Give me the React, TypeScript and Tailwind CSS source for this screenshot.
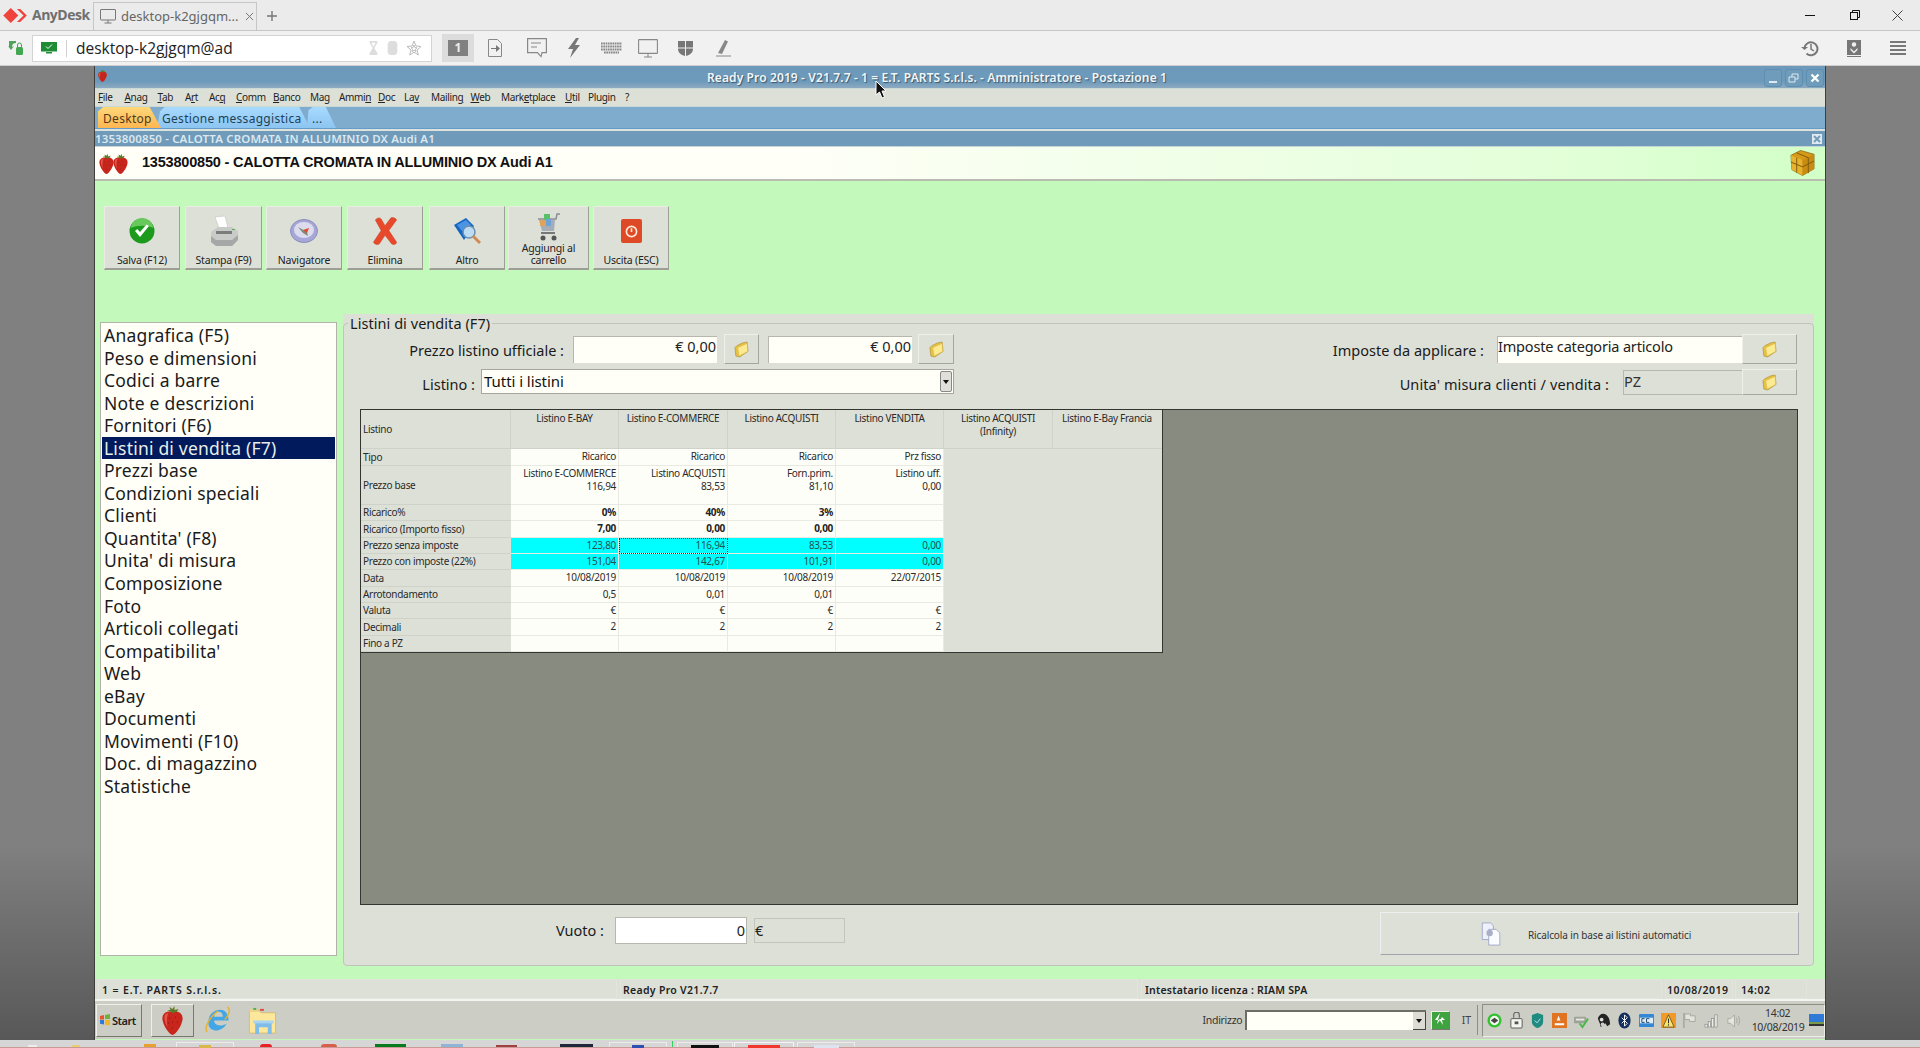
import React from "react";

const Strawberry = ({ className }: { className?: string }) => (
  <svg viewBox="0 0 24 30" className={className}>
    <path d="M12 7C18 5 23 9 22 15C21 21 15 30 12 30C9 30 3 21 2 15C1 9 6 5 12 7Z" fill="#c8261c" />
    <path d="M5 9C3 12 4 17 7 22C6 16 6 12 8 8Z" fill="#e2574a" />
    <path d="M12 8L7 5L10 5L9 2L12 4L14 1L14 5L18 4L16 7Z" fill="#5c7a25" />
    <g fill="#7c1410">
      <circle cx="9" cy="13" r=".6" /><circle cx="15" cy="12" r=".6" /><circle cx="12" cy="17" r=".6" />
      <circle cx="17" cy="17" r=".6" /><circle cx="8" cy="18" r=".6" /><circle cx="12" cy="23" r=".6" />
    </g>
  </svg>
);

const Folder = () => (
  <svg viewBox="0 0 16 18" className="h-[17px] w-[15px]">
    <path d="M1 7L3 5L9 2L14 1L15 11L6 17L2 16Z" fill="#e8c143" stroke="#a88f3a" strokeWidth=".7" />
    <path d="M4 7L14 2.500L14.500 11L5.500 16Z" fill="#fdeb92" stroke="#d9b84a" strokeWidth=".5" />
  </svg>
);

const FolderBtn = ({ w, h, ml }: { w: string; h: string; ml: string }) => (
  <div className={`flex items-center justify-center bg-[#dde0d7] border border-t-[#eff0ea] border-l-[#eff0ea] border-r-[#a5a79f] border-b-[#a5a79f] ${w} ${h} ${ml}`}>
    <Folder />
  </div>
);

const MENU: [string, string, string, string][] = [
  ["", "F", "ile", "w-[26.5px]"],
  ["", "A", "nag", "w-[33px]"],
  ["", "T", "ab", "w-[27.5px]"],
  ["A", "r", "t", "w-[24px]"],
  ["Ac", "q", "", "w-[27px]"],
  ["", "C", "omm", "w-[37px]"],
  ["", "B", "anco", "w-[37px]"],
  ["Ma", "g", "", "w-[29px]"],
  ["Ammi", "n", "", "w-[39px]"],
  ["", "D", "oc", "w-[26px]"],
  ["La", "v", "", "w-[27px]"],
  ["Mailin", "g", "", "w-[39.5px]"],
  ["", "W", "eb", "w-[30.5px]"],
  ["Mark", "e", "tplace", "w-[64px]"],
  ["", "U", "til", "w-[23px]"],
  ["Plugin", "", "", "w-[37px]"],
  ["?", "", "", "w-[10px]"],
];

const LIST = [
  "Anagrafica (F5)", "Peso e dimensioni", "Codici a barre", "Note e descrizioni", "Fornitori (F6)",
  "Listini di vendita (F7)", "Prezzi base", "Condizioni speciali", "Clienti", "Quantita' (F8)",
  "Unita' di misura", "Composizione", "Foto", "Articoli collegati", "Compatibilita'", "Web", "eBay",
  "Documenti", "Movimenti (F10)", "Doc. di magazzino", "Statistiche",
];

type Row = { label: string; h: string; vals: string[][]; bold?: boolean; cyan?: boolean };
const ROWS: Row[] = [
  { label: "Tipo", h: "h-[17px]", vals: [["Ricarico"], ["Ricarico"], ["Ricarico"], ["Prz fisso"]] },
  { label: "Prezzo base", h: "h-[39px]", vals: [["Listino E-COMMERCE", "116,94"], ["Listino ACQUISTI", "83,53"], ["Forn.prim.", "81,10"], ["Listino uff.", "0,00"]] },
  { label: "Ricarico%", h: "h-[16px]", bold: true, vals: [["0%"], ["40%"], ["3%"], [""]] },
  { label: "Ricarico (Importo fisso)", h: "h-[17px]", bold: true, vals: [["7,00"], ["0,00"], ["0,00"], [""]] },
  { label: "Prezzo senza imposte", h: "h-[16px]", cyan: true, vals: [["123,80"], ["116,94"], ["83,53"], ["0,00"]] },
  { label: "Prezzo con imposte (22%)", h: "h-[16px]", cyan: true, vals: [["151,04"], ["142,67"], ["101,91"], ["0,00"]] },
  { label: "Data", h: "h-[17px]", vals: [["10/08/2019"], ["10/08/2019"], ["10/08/2019"], ["22/07/2015"]] },
  { label: "Arrotondamento", h: "h-[16px]", vals: [["0,5"], ["0,01"], ["0,01"], [""]] },
  { label: "Valuta", h: "h-[16px]", vals: [["€"], ["€"], ["€"], ["€"]] },
  { label: "Decimali", h: "h-[17px]", vals: [["2"], ["2"], ["2"], ["2"]] },
  { label: "Fino a PZ", h: "h-[16px]", vals: [[""], [""], [""], [""]] },
];
const COLW = ["w-[108px]", "w-[109px]", "w-[108px]", "w-[108px]"];

const ToolBtn = ({ w, ml, label, icon }: { w: string; ml: string; label: React.ReactNode; icon: React.ReactNode }) => (
  <div className={`relative flex h-[64px] flex-col items-center bg-[#dde0d7] border border-t-[#e9ebe4] border-l-[#e9ebe4] border-r-[#9d9f97] border-b-[#9d9f97] border-b-2 ${w} ${ml}`}>
    <div className="flex h-[44px] w-full items-center justify-center">{icon}</div>
    <div className="absolute inset-x-0 bottom-[2px] text-center text-[10.5px] leading-[12px] text-[#222] tracking-[-0.2px]">{label}</div>
  </div>
);

const TrayIcon = ({ children }: { children: React.ReactNode }) => (
  <svg viewBox="0 0 16 18" className="h-[17px] w-[15px] shrink-0">{children}</svg>
);

export default function App() {
  return (
    <div className="flex h-[1048px] w-[1920px] flex-col overflow-hidden bg-[#808080] font-['Noto_Sans',sans-serif] text-black">
      {/* AnyDesk tab bar */}
      <div className="flex h-[31px] shrink-0 items-end border-b border-[#c6c6c6] bg-[#ebebeb]">
        <div className="flex h-[30px] w-[93px] items-center pl-[3px]">
          <svg viewBox="0 0 26 18" className="h-[17px] w-[25px]">
            <path d="M8 1L16 9L8 17L0 9Z" fill="#ef443b" />
            <path d="M18 2L25 9L18 16L14.5 16L21.5 9L14.5 2Z" fill="#ef443b" />
          </svg>
          <span className="ml-[4px] font-['Open_Sans',sans-serif] text-[14px] font-bold leading-none tracking-[-0.5px] text-[#6f6f6f]">AnyDesk</span>
        </div>
        <div className="flex h-[28px] w-[164px] items-center border border-b-0 border-[#c6c6c6] pl-[6px]">
          <svg viewBox="0 0 16 15" className="h-[15px] w-[16px]" fill="none" stroke="#777" strokeWidth="1">
            <rect x=".5" y=".5" width="15" height="10.5" rx=".5" /><path d="M8 11v3M4.5 14h7" />
          </svg>
          <span className="ml-[5px] text-[13px] leading-none text-[#666]">desktop-k2gjgqm...</span>
          <svg viewBox="0 0 10 10" className="ml-[6px] h-[9px] w-[9px]" stroke="#777" strokeWidth="1.1"><path d="M1 1l8 8M9 1l-8 8" /></svg>
        </div>
        <svg viewBox="0 0 10 10" className="mb-[9px] ml-[10px] h-[10px] w-[10px]" stroke="#777" strokeWidth="1.4"><path d="M5 0v10M0 5h10" /></svg>
        <div className="ml-auto flex h-[30px] items-center">
          <svg viewBox="0 0 10 10" className="h-[10px] w-[10px]" stroke="#111" strokeWidth="1"><path d="M0 5.5h10" /></svg>
          <svg viewBox="0 0 10 10" className="ml-[35px] h-[10px] w-[10px]" fill="none" stroke="#111" strokeWidth="1"><rect x=".5" y="2.5" width="7" height="7" /><path d="M2.5 2.5v-2h7v7h-2" /></svg>
          <svg viewBox="0 0 11 11" className="ml-[32px] mr-[17px] h-[11px] w-[11px]" stroke="#444" strokeWidth="1"><path d="M.5.5l10 10M10.5.5l-10 10" /></svg>
        </div>
      </div>

      {/* AnyDesk toolbar */}
      <div className="flex h-[35px] shrink-0 items-center border-b border-[#cdcdcd] bg-[#f1f1f1]">
        <svg viewBox="0 0 16 16" className="ml-[8px] h-[16px] w-[16px]">
          <path d="M1 1h7v2a4 4 0 0 0-4 4l2-1-3 4-3-4 1 .5z" fill="#3d9b4a" opacity=".9" />
          <rect x="8" y="7" width="7" height="8" rx="1.5" fill="#43a650" />
          <path d="M9.5 7V5a2 2 0 0 1 4 0v2" fill="none" stroke="#43a650" />
        </svg>
        <div className="ml-[8px] flex h-[27px] w-[400px] items-center border border-[#d3d3d3] bg-white">
          <svg viewBox="0 0 16 12" className="ml-[8px] h-[12px] w-[16px]">
            <rect width="16" height="9.5" fill="#1e8c34" /><path d="M5 4.5l2 2 4-4" fill="none" stroke="#fff" /><rect x="5" y="10" width="6" height="1.5" fill="#1e8c34" />
          </svg>
          <div className="ml-[9px] h-[17px] w-px bg-[#d0d0d0]" />
          <span className="ml-[9px] mt-[1px] font-['Open_Sans',sans-serif] text-[15.5px] leading-none text-[#222]">desktop-k2gjgqm@ad</span>
          <svg viewBox="0 0 9 16" className="ml-[136px] h-[14px] w-[9px]" fill="#ddd"><path d="M0 0h9v2L5.5 8 9 14v2H0v-2l3.5-6L0 2zM2 2l2.5 4.5L7 2z" /></svg>
          <svg viewBox="0 0 11 16" className="ml-[9px] h-[14px] w-[11px]" fill="#ddd"><rect width="11" height="16" rx="4" /></svg>
          <svg viewBox="0 0 16 16" className="ml-[8px] h-[16px] w-[16px]" fill="none" stroke="#bbb"><path d="M8 1l2 5 5 .5-4 3.5 1.3 5L8 12.2 3.700 15 5 10 1 6.500 6 6z" /><path d="M8 5l1 2.500 2 .3-1.600 1.500.5 2.200L8 10.300l-1.900 1.200.5-2.200L5 7.800l2-.3z" /></svg>
        </div>
        <div className="ml-[10px] flex h-[28px] w-[32px] items-center justify-center bg-[#dcdcdc]">
          <div className="flex h-[16px] w-[20px] items-center justify-center bg-[#808080] text-[12px] font-bold leading-none text-[#eee]">1</div>
        </div>
        <svg viewBox="0 0 14 18" className="ml-[14px] h-[18px] w-[14px]" fill="none" stroke="#888"><path d="M.5.5h9l4 4v13H.5z" /><path d="M3 9h5V6l4 3.500-4 3.500v-3H3z" fill="#777" stroke="none" /></svg>
        <svg viewBox="0 0 20 20" className="ml-[25px] h-[20px] w-[20px]" fill="none" stroke="#888" strokeWidth="1.200"><path d="M.6.6h18.800v14H15l-1 4-3.500-4H.6z" /><path d="M4 5h10M4 9h6" /></svg>
        <svg viewBox="0 0 12 20" className="ml-[21px] h-[20px] w-[12px]" fill="#777"><path d="M8 0L0 11h5L2 20l10-13H7l4-7z" /></svg>
        <svg viewBox="0 0 21 12" className="ml-[21px] h-[12px] w-[21px]"><g stroke="#888" strokeWidth="1.800" strokeDasharray="1.700 .6"><path d="M0 1.500h21M0 4.500h21M0 7.500h21M3 10.500h15" /></g></svg>
        <svg viewBox="0 0 20 19" className="ml-[16px] h-[19px] w-[20px]" fill="none" stroke="#888" strokeWidth="1.100"><rect x=".6" y=".6" width="18.800" height="13.800" rx=".5" /><path d="M10 14.500V18M6 18h8" /></svg>
        <svg viewBox="0 0 15 15" className="ml-[20px] h-[15px] w-[15px]" fill="#777"><path d="M0 0h7v6.500H0zM8 0h7v6.500H8zM0 7.500h7V15C3 14 0 12 0 7.500zM8 7.500h7C15 12 12 14 8 15z" /></svg>
        <svg viewBox="0 0 15 18" className="ml-[23px] h-[18px] w-[15px]" fill="none"><path d="M2 14L9 1l3 1.500L6 15z" fill="#888" /><path d="M0 17h15" stroke="#888" /></svg>
        <div className="ml-auto flex items-center">
          <svg viewBox="0 0 18 17" className="h-[17px] w-[18px]" fill="none" stroke="#777" strokeWidth="2"><path d="M3.500 8a6.500 6.500 0 1 1 2 5.500" /><path d="M10 4v5l3 2" strokeWidth="1.500" /><path d="M0 7l3.500 3L7 7z" fill="#777" stroke="none" /></svg>
          <svg viewBox="0 0 14 17" className="ml-[28px] h-[17px] w-[14px]" fill="#777"><rect width="14" height="15" /><circle cx="7" cy="4.500" r="2.200" fill="#f1f1f1" /><path d="M3.500 8L7 11.500 10.500 8v2L7 13.500 3.500 10z" fill="#f1f1f1" /><rect y="16" width="14" height="1" /></svg>
          <svg viewBox="0 0 16 14" className="ml-[29px] mr-[14px] h-[14px] w-[16px]" fill="#777"><rect width="16" height="2" /><rect y="4" width="16" height="2" /><rect y="8" width="16" height="2" /><rect y="12" width="16" height="2" /></svg>
        </div>
      </div>

      {/* Remote desktop */}
      <div className="flex h-[974px] shrink-0">
        <div className="w-[94px] shrink-0 bg-gradient-to-b from-[#808080] from-80% to-[#585858]" />
        <div className="relative flex w-[1732px] shrink-0 flex-col border-x border-[#3c3f3a] bg-[#c3f9bb]">
          {/* Title bar */}
          <div className="relative flex h-[22px] shrink-0 items-start bg-gradient-to-b from-[#6d9aba] from-70% to-[#8caac0] pl-[2px]">
            <Strawberry className="mt-[3px] h-[13px] w-[11px]" />
            <div className="ml-[599px] mt-[4px] whitespace-nowrap text-[12px] font-semibold leading-[15px] tracking-[0.11px] text-[#f2f6f8] [text-shadow:1px_1px_1px_#39566c]">
              Ready Pro 2019 - V21.7.7 - 1 = E.T. PARTS S.r.l.s. - Amministratore - Postazione 1
            </div>
            <div className="ml-auto mr-[1px] mt-[3px] flex gap-[3px]">
              {[
                <path key="a" d="M3 11h8" stroke="#dfe8ee" strokeWidth="2" />,
                <path key="b" d="M2 6h6v5H2zM5 6V3h6v5H8" fill="none" stroke="#dfe8ee" strokeWidth="1" />,
                <path key="c" d="M3.500 3.500l7 7M10.500 3.500l-7 7" stroke="#fff" strokeWidth="2.200" />,
              ].map((p, i) => (
                <div key={i} className="flex h-[18px] w-[18px] items-center justify-center rounded-[3px] border border-[#5f8fb0] bg-[#6f9cbb]">
                  <svg viewBox="0 0 14 14" className="h-[14px] w-[14px]">{p}</svg>
                </div>
              ))}
            </div>
          </div>

          {/* Menu */}
          <div className="flex h-[19px] shrink-0 items-center border-y border-[#c9d9d5] bg-[#dde0d7] pb-[1px] pl-[3px] text-[10px] tracking-[-0.35px] text-[#222]">
            {MENU.map(([a, u, b, w], i) => (
              <span key={i} className={`${w} shrink-0 whitespace-nowrap leading-none`}>
                {a}<span className="underline">{u}</span>{b}
              </span>
            ))}
          </div>

          {/* Tabs */}
          <div className="flex h-[22px] shrink-0 items-end border-b border-[#649ccb] bg-[#7fabcc] pl-[3px] text-[12px] leading-none tracking-[0.3px]">
            <div className="z-10 flex h-[21px] w-[63px] items-center bg-gradient-to-b from-[#ffd778] to-[#ffb650] pl-[5px] pt-[2px] text-[#4d3a1a] [clip-path:polygon(0_100%,0_20%,8%_0,82%_0,100%_100%)]">Desktop</div>
            <div className="-ml-[4px] flex h-[21px] w-[153px] items-center bg-gradient-to-b from-[#a8daff] to-[#8cc5f1] pl-[5px] pt-[2px] text-[#1d4258] [clip-path:polygon(0_100%,2%_20%,5%_0,93%_0,100%_100%)]">Gestione messaggistica</div>
            <div className="-ml-[3px] flex h-[21px] w-[29px] items-center bg-gradient-to-b from-[#a8daff] to-[#8cc5f1] pl-[5px] pt-[2px] text-[#1d4258] [clip-path:polygon(0_100%,5%_15%,20%_0,65%_0,100%_100%)]">...</div>
          </div>

          <div className="h-[2px] shrink-0 bg-[#dde3dc]" />

          {/* Child title */}
          <div className="flex h-[16px] shrink-0 items-center border-b border-[#c4d5d6] bg-[#6f9ab9] text-[11.5px] font-semibold leading-none text-[#dbe8f0]">
            <span className="tracking-[0.13px]">1353800850 - CALOTTA CROMATA IN ALLUMINIO DX Audi A1</span>
            <div className="ml-auto mr-[3px] flex h-[10px] w-[10px] items-center justify-center bg-[#dfe9ef]">
              <svg viewBox="0 0 8 8" className="h-[8px] w-[8px]" stroke="#6f9ab9" strokeWidth="1.800"><path d="M1 1l6 6M7 1L1 7" /></svg>
            </div>
          </div>

          {/* Header */}
          <div className="flex h-[34px] shrink-0 items-center border-b-2 border-[#b9bdb0] bg-gradient-to-r from-[#fffff8] from-40% via-[#e2ffd8] via-85% to-[#d2ffc7] pl-[3px]">
            <div className="flex w-[33px]">
              <Strawberry className="h-[21px] w-[17px]" />
              <Strawberry className="-ml-[3px] h-[21px] w-[17px]" />
            </div>
            <span className="mb-[1px] ml-[11px] font-['Liberation_Sans',sans-serif] text-[14.5px] font-bold leading-none tracking-[-0.2px] text-[#111]">1353800850 - CALOTTA CROMATA IN ALLUMINIO DX Audi A1</span>
            <svg viewBox="0 0 28 28" className="ml-auto mr-[9px] h-[28px] w-[27px]">
              <path d="M2 6L12 1l14 4v15l-12 7-11-6z" fill="#d49a18" stroke="#7d5a10" strokeWidth=".7" />
              <path d="M2 6l12 5v16l-11-6z" fill="#e8b32c" />
              <path d="M14 11l12-6v15l-12 7z" fill="#c98c12" />
              <path d="M2 13l12 5 12-6M8 3.500l12 5v16M8 8.500V24" fill="none" stroke="#7d5a10" strokeWidth="1" />
            </svg>
          </div>

          {/* Body */}
          <div className="flex h-[798px] shrink-0 flex-col">
            <div className="ml-[9px] mt-[25px] flex h-[64px] shrink-0">
              <ToolBtn w="w-[76px]" ml="" label="Salva (F12)" icon={
                <svg viewBox="0 0 26 26" className="mt-[4px] h-[26px] w-[26px]"><circle cx="13" cy="13" r="12.500" fill="#1b9a1b" /><path d="M2 10a11 10 0 0 1 22 0c-5-3-16-3-22 0z" fill="#67c95b" /><path d="M6 13l5 6 9-11-2.500-1.500L11 14l-2.800-3z" fill="#fff" /></svg>} />
              <ToolBtn w="w-[77px]" ml="ml-[5px]" label="Stampa (F9)" icon={
                <svg viewBox="0 0 28 32" className="mt-[4px] h-[32px] w-[28px]"><path d="M5 2l10-1 3 12H9z" fill="#fff" stroke="#bbb" strokeWidth=".5" /><path d="M1 17l7-5h14l6 4v8l-6 7H6l-5-4z" fill="#c8cbc8" /><path d="M1 21l5 4h16l6-5v5l-6 6H6l-5-4z" fill="#a5a8a6" /><path d="M6 16h16v3H6z" fill="#7a7d7b" /><path d="M22 14h3v1h-3z" fill="#5ab04a" /></svg>} />
              <ToolBtn w="w-[76px]" ml="ml-[4px]" label="Navigatore" icon={
                <svg viewBox="0 0 28 24" className="mt-[3px] h-[24px] w-[28px]"><ellipse cx="14" cy="12" rx="13.500" ry="11.500" fill="#a6a7d8" stroke="#8d8eb8" /><ellipse cx="14" cy="11" rx="10" ry="8" fill="#dcdcee" /><path d="M8 8l9 5 1 4-5-3z" fill="#7a8c7a" /><path d="M13 11l6-2-2 5z" fill="#e04a2a" /></svg>} />
              <ToolBtn w="w-[76px]" ml="ml-[5px]" label="Elimina" icon={
                <svg viewBox="0 0 26 30" className="mt-[4px] h-[29px] w-[26px]"><path d="M3 3c2-2 4-3 6-1l4 7 6-8c2-1 5 0 6 2l-8 11 8 12c0 2-3 3-5 2l-7-9-6 9c-2 1-5 0-6-2l8-12z" fill="#e8492b" stroke="#c53a20" strokeWidth=".5" /></svg>} />
              <ToolBtn w="w-[76px]" ml="ml-[6px]" label="Altro" icon={
                <svg viewBox="0 0 28 30" className="mt-[5px] h-[30px] w-[28px]"><path d="M1 8L13 1l8 8-10 14z" fill="#1366c4" /><path d="M4 8l9-5 5 5-9 6z" fill="#4c94e2" /><circle cx="16" cy="15" r="6" fill="#bcdcf4" stroke="#6d8fae" strokeWidth="1.500" /><path d="M20 19l7 7" stroke="#d08a55" strokeWidth="3" /></svg>} />
              <ToolBtn w="w-[81px]" ml="ml-[3px]" label={<>Aggiungi al<br />carrello</>} icon={
                <svg viewBox="0 0 24 32" className="-mt-[5px] h-[32px] w-[24px]"><path d="M1 8h18l1-5h3" fill="none" stroke="#8a8f95" strokeWidth="1.500" /><path d="M2 9h16l-1 11H5z" fill="#a5adb8" /><rect x="7" y="3" width="6" height="6" fill="#58c168" /><rect x="3" y="9" width="5" height="6" fill="#e0a35a" /><rect x="9" y="8" width="5" height="7" fill="#6fa3d8" /><path d="M4 22h14" stroke="#777" strokeWidth="2" /><circle cx="6" cy="27" r="2.500" fill="#555" /><circle cx="17" cy="27" r="2.500" fill="#555" /></svg>} />
              <ToolBtn w="w-[76px]" ml="ml-[4px]" label="Uscita (ESC)" icon={
                <div className="mt-[4px] flex h-[24px] w-[21px] items-center justify-center rounded-[2px] bg-[#df4a26]">
                  <svg viewBox="0 0 14 14" className="h-[13px] w-[13px]" fill="none" stroke="#ffe9d8" strokeWidth="1.800"><circle cx="7" cy="7" r="5.500" /><path d="M7 3.500v4" /></svg>
                </div>} />
            </div>

            <div className="ml-[5px] mt-[44px] flex shrink-0">
              {/* Left list */}
              <div className="mt-[8px] h-[634px] w-[237px] shrink-0 border border-[#b0b3a8] bg-[#fffff8] px-px pt-[1px]">
                {LIST.map((t, i) => (
                  <div key={t} className={i === 5
                    ? "h-[22.55px] bg-[#001a5c] pl-[2px] text-[17.500px] leading-[22.55px] tracking-[0.2px] text-[#e8eee8] whitespace-nowrap"
                    : "h-[22.55px] pl-[2px] text-[17.500px] leading-[22.55px] tracking-[0.2px] text-[#1a1a1a] whitespace-nowrap"}>{t}</div>
                ))}
              </div>

              {/* Right panel */}
              <div className="ml-[6px] h-[652px] w-[1471px] shrink-0 rounded-b-[4px] bg-[#dde0d7]">
                <fieldset className="h-full rounded-[4px] border border-[#c2c4ba]">
                  <legend className="ml-[4px] px-[2px] text-[14.500px] leading-[18px] tracking-[0.05px] text-[#1a1a1a]">Listini di vendita (F7)</legend>

                  {/* Row 1 */}
                  <div className="mt-[2px] flex h-[30px] items-center">
                    <div className="mt-[3px] w-[220px] text-right text-[14.500px] leading-none text-[#1a1a1a]">Prezzo listino ufficiale :</div>
                    <div className="ml-[9px] flex h-[27px] w-[144px] justify-end border border-[#b6b8ae] border-r-0 border-b-0 bg-[#fffff8] pr-[1px] text-[14.500px] leading-[19px] text-[#222]">€ 0,00</div>
                    <FolderBtn w="w-[35px]" h="h-[30px]" ml="ml-[7px]" />
                    <div className="ml-[9px] flex h-[27px] w-[144px] justify-end border border-[#b6b8ae] border-r-0 border-b-0 bg-[#fffff8] pr-[1px] text-[14.500px] leading-[19px] text-[#222]">€ 0,00</div>
                    <FolderBtn w="w-[36px]" h="h-[30px]" ml="ml-[6px]" />
                    <div className="ml-auto mt-[3px] text-[14.500px] leading-none text-[#1a1a1a]">Imposte da applicare :</div>
                    <div className="ml-[13px] h-[27px] w-[245px] border border-[#b6b8ae] border-r-0 border-b-0 bg-[#fffff8] text-[14.500px] leading-[19px] tracking-[-0.18px] text-[#222]">Imposte categoria articolo</div>
                    <FolderBtn w="w-[55px]" h="h-[30px]" ml="mr-[16px]" />
                  </div>

                  {/* Row 2 */}
                  <div className="mt-[5px] flex h-[28px] items-start">
                    <div className="mt-[8px] w-[131px] text-right text-[14.500px] leading-none text-[#1a1a1a]">Listino :</div>
                    <div className="ml-[6px] flex h-[25px] w-[473px] items-center justify-between border border-[#a5a79f] bg-[#fffff8] pl-[2px] pr-[1px] text-[15px] leading-none tracking-[-0.05px] text-[#111]">
                      <span>Tutti i listini</span>
                      <div className="flex h-[21px] w-[12px] items-center justify-center rounded-[2px] border border-[#888] bg-[#dfe0da]">
                        <svg viewBox="0 0 6 4" className="h-[4px] w-[6px]"><path d="M0 0h6L3 4z" fill="#111" /></svg>
                      </div>
                    </div>
                    <div className="ml-auto mt-[8px] text-[14.500px] leading-none tracking-[0.1px] text-[#1a1a1a]">Unita' misura clienti / vendita :</div>
                    <div className="ml-[14px] mt-[1px] h-[25px] w-[119px] border border-[#b6b8ae] border-r-0 bg-[#dde0d7] text-[14.500px] leading-[20px] text-[#333]">PZ</div>
                    <FolderBtn w="w-[55px]" h="h-[26px]" ml="mr-[16px]" />
                  </div>

                  {/* Grid */}
                  <div className="ml-[16px] mt-[12px] h-[496px] w-[1438px] border border-[#333630] bg-[#888b80]">
                    <div className="w-[802px] border-b border-r border-[#333630] text-[10px] leading-[13px] tracking-[-0.3px] text-[#2a2a2a]">
                      {/* Header */}
                      <div className="flex h-[39px] border-b border-[#cfd2c8] bg-[#dde0d7]">
                        <div className="flex w-[150px] items-center border-r border-[#cfd2c8] pl-[2px]">Listino</div>
                        {[
                          [["Listino E-BAY"], "w-[108px]"], [["Listino E-COMMERCE"], "w-[109px]"], [["Listino ACQUISTI"], "w-[108px]"], [["Listino VENDITA"], "w-[108px]"],
                          [["Listino ACQUISTI", "(Infinity)"], "w-[109px]"], [["Listino E-Bay Francia"], "w-[108px]"],
                        ].map(([t, w], i) => (
                          <div key={i} className={`${w as string} border-r border-[#cfd2c8] pt-[2px] text-center whitespace-nowrap last:border-r-0`}>
                            {(t as string[]).map((l) => <div key={l}>{l}</div>)}
                          </div>
                        ))}
                      </div>
                      {/* Rows */}
                      {ROWS.map((r) => (
                        <div key={r.label} className={`flex ${r.h}`}>
                          <div className="flex w-[150px] shrink-0 items-center bg-[#dde0d7] pl-[2px] whitespace-nowrap border-b border-[#cfd2c8]">{r.label}</div>
                          {r.vals.map((v, i) => {
                            const focus = r.label === "Prezzo senza imposte" && i === 1;
                            return (
                              <div key={i} className={`${COLW[i]} shrink-0 px-[2px] pt-[1px] text-right whitespace-nowrap border-r border-b border-[#e9ebe3] ${r.cyan ? "bg-[#00ffff] text-[#26504f]" : "bg-[#fefef8]"} ${r.bold ? "font-bold text-[#222]" : ""} ${focus ? "outline-1 -outline-offset-1 outline-dotted outline-[#333]" : ""}`}>
                                {v.map((l, k) => <div key={k}>{l}</div>)}
                              </div>
                            );
                          })}
                          <div className="flex-1 bg-[#dde0d7]" />
                        </div>
                      ))}
                    </div>
                  </div>

                  {/* Bottom */}
                  <div className="mt-[7px] flex h-[43px] items-center">
                    <div className="mb-[6px] w-[260px] text-right text-[14.500px] leading-none text-[#1a1a1a]">Vuoto :</div>
                    <div className="mb-[6px] ml-[11px] h-[27px] w-[132px] border border-[#b6b8ae] bg-white pr-[1px] text-right text-[14.500px] leading-[24px] text-[#222]">0</div>
                    <div className="mb-[6px] ml-[7px] h-[25px] w-[91px] border border-[#c4c6bc] bg-[#dde0d7] text-[14.500px] leading-[22px] text-[#222]">€</div>
                    <div className="ml-auto mr-[14px] flex h-[43px] w-[419px] items-center border border-[#eceef0] border-r-[#a9abb5] border-b-[#a0a2ae] bg-[#dde0d7]">
                      <svg viewBox="0 0 22 26" className="ml-[100px] h-[24px] w-[21px]">
                        <path d="M1 1h9l3 3v15H1z" fill="#eef1fa" stroke="#8d97c0" strokeWidth=".8" />
                        <path d="M8 8h8l4 4v13H8z" fill="#fbfcff" stroke="#8d97c0" strokeWidth=".8" />
                        <circle cx="9" cy="12" r="3.500" fill="#aab0c8" />
                      </svg>
                      <span className="ml-[26px] mt-[2px] text-[10px] leading-none tracking-[-0.12px] text-[#333]">Ricalcola in base ai listini automatici</span>
                    </div>
                  </div>
                </fieldset>
              </div>
            </div>
          </div>

          {/* Status bar */}
          <div className="flex h-[22px] shrink-0 border-b-2 border-[#f3f5f0] bg-[#dde0d7] pl-[3px] text-[10.500px] font-semibold leading-[20px] text-[#222]">
            <div className="w-[519px] border border-[#e3e5dd] pl-[3px] tracking-[0.9px]">1 = E.T. PARTS S.r.l.s.</div>
            <div className="ml-[3px] w-[518px] border border-[#e3e5dd] pl-[2px] tracking-[0.3px]">Ready Pro V21.7.7</div>
            <div className="ml-[3px] w-[521px] border border-[#e3e5dd] pl-[3px] tracking-[0.2px]">Intestatario licenza : RIAM SPA</div>
            <div className="ml-[3px] w-[68px] border border-[#e3e5dd] pl-[1px] tracking-[0.5px]">10/08/2019</div>
            <div className="ml-[2px] w-[72px] border border-[#e3e5dd] pl-[5px] tracking-[0.5px]">14:02</div>
          </div>

          {/* Inner taskbar */}
          <div className="flex h-[38px] shrink-0 items-center bg-[#cccdc4]">
            <div className="ml-[1px] flex h-[33px] w-[46px] items-center border border-[#f0f0ea] border-r-[#77796f] border-b-[#77796f] pl-[2px] text-[11px] font-semibold leading-none tracking-[-0.5px] text-[#222]">
              <svg viewBox="0 0 12 12" className="h-[12px] w-[12px] shrink-0"><path d="M1 2l4-1v4.500H1z" fill="#e5572b" /><path d="M6 1l5-1v5H6z" fill="#6eb23e" /><path d="M1 6h4v4.500l-4-.7z" fill="#2f7ad6" /><path d="M6 6h5v5.500l-5-.7z" fill="#f0b823" /></svg>
              <span className="ml-[1px]">Start</span>
            </div>
            <div className="ml-[9px] flex h-[33px] w-[43px] items-center justify-center border border-[#f0f0ea] border-r-[#77796f] border-b-[#77796f]">
              <Strawberry className="h-[30px] w-[25px]" />
            </div>
            <svg viewBox="0 0 28 30" className="ml-[10px] h-[29px] w-[28px]">
              <path d="M4 17c0-8 6-13 12-13s9 5 9 11H10c0 5 7 7 13 3-3 6-9 8-13 7-4-1-6-4-6-8zM10 11h9c0-3-2-5-4-5s-5 2-5 5z" fill="#43a7e6" />
              <path d="M24 1c3 2 2 8-3 13M3 27C-1 23 5 12 14 5" fill="none" stroke="#e6b230" strokeWidth="1.500" />
            </svg>
            <svg viewBox="0 0 30 30" className="ml-[16px] h-[29px] w-[30px]">
              <path d="M1 5h10l2 2h15v21H1z" fill="#fce79a" stroke="#d0b45c" strokeWidth=".7" />
              <path d="M1 3h8v3H1z" fill="#e8d48a" /><path d="M5 2h3v2H5z" fill="#4caf50" /><path d="M12 3h4v2h-4z" fill="#e04a3a" />
              <path d="M7 16h17v13h-4v-7H11v7H7z" fill="#7fbce8" /><path d="M5 15h21v3H5z" fill="#a8d4f2" />
            </svg>

            <span className="ml-[925px] text-[10.500px] leading-none tracking-[-0.3px] text-[#333]">Indirizzo</span>
            <div className="ml-[3px] flex h-[20px] w-[181px] justify-end border-l-2 border-t-2 border-[#6d6f66] bg-[#fffff8]">
              <div className="flex h-[18px] w-[13px] items-center justify-center border-r border-b border-[#444] bg-[#dcdcd4]">
                <svg viewBox="0 0 6 4" className="h-[4px] w-[6px]"><path d="M0 0h6L3 4z" fill="#111" /></svg>
              </div>
            </div>
            <div className="ml-[5px] flex h-[19px] w-[19px] items-center justify-center border border-[#f0f0ea] border-b-[#777] border-r-[#777] bg-[#3fa43f]">
              <svg viewBox="0 0 12 14" className="h-[14px] w-[12px]" fill="#fff"><path d="M6 0L1 7h3l-1 4 3-4H4zM8 4l3 3H8l1 5-4-6h2z" /></svg>
            </div>
            <span className="ml-[12px] text-[10.500px] leading-none text-[#444]">IT</span>
            <div className="ml-[6px] h-[30px] w-[1px] bg-[#8d8f85]" />

            {/* Tray */}
            <div className="ml-[4px] flex h-[33px] w-[344px] items-center border border-[#8d8f85] border-r-[#f0f0ea] border-b-[#f0f0ea] pl-[4px]">
              <div className="flex gap-[6.700px]">
                <TrayIcon><circle cx="8" cy="9" r="7.500" fill="#2fc32f" /><circle cx="8" cy="9" r="5" fill="#f4f4f0" /><path d="M4 9l4-3 4 3-4 3z" fill="#444" /></TrayIcon>
                <TrayIcon><path d="M5 6V3a3 3 0 0 1 6 0v3" fill="none" stroke="#666" strokeWidth="1.200" /><rect x="2" y="7" width="12" height="10" rx="1" fill="#f5f5ef" stroke="#555" /><rect x="6" y="10" width="4" height="3" fill="#555" /></TrayIcon>
                <TrayIcon><path d="M8 1l6 2v7c0 4-3 6-6 7-3-1-6-3-6-7V3z" fill="#1f8c80" /><path d="M5 9l2.500 2.500L11 7" fill="none" stroke="#cdf" /></TrayIcon>
                <TrayIcon><rect width="16" height="16" y="1" fill="#e07420" /><path d="M7 4l2 5H5zM3 12h10v2H3z" fill="#fff" /></TrayIcon>
                <TrayIcon><rect y="5" width="13" height="7" rx="1" fill="#9da39a" /><rect x="2" y="7" width="9" height="2" fill="#e8e8e0" /><path d="M6 12l3 4 6-9" fill="none" stroke="#4cb848" strokeWidth="2" /></TrayIcon>
                <TrayIcon><path d="M2 7c1-4 4-6 7-5 4 1 6 6 6 11l-3 2-2-3-5 4-1-4z" fill="#232323" /><circle cx="6" cy="8" r="2" fill="#ddd" /><circle cx="7" cy="13" r="2" fill="#ccc" /></TrayIcon>
                <TrayIcon><ellipse cx="8" cy="9" rx="6.500" ry="8.500" fill="#13305f" /><path d="M5 6l6 6-3 3V3l3 3-6 6" fill="none" stroke="#fff" /></TrayIcon>
                <TrayIcon><rect y="2" width="16" height="14" rx="1" fill="#3388d6" /><rect x="1" y="6" width="14" height="6" fill="#dcecf9" /><path d="M6 7H3v4h3M11 7H8v4h3" fill="none" stroke="#246" /></TrayIcon>
                <TrayIcon><rect y="1" width="16" height="16" fill="#f29a28" /><path d="M8 3l6 13H2z" fill="#f7e56a" stroke="#333" strokeWidth=".7" /><path d="M8 7v5M8 13v1.500" stroke="#222" /></TrayIcon>
                <TrayIcon><path d="M2 1v16" stroke="#a3a59a" strokeWidth="1.500" /><path d="M3 2h6v2h5v6H8V8H3z" fill="#e3e4dc" stroke="#a3a59a" /></TrayIcon>
                <TrayIcon><g fill="#eeeee8" stroke="#888" strokeWidth=".7"><rect x="1" y="13" width="2.500" height="3" /><rect x="4.500" y="10" width="2.500" height="6" /><rect x="8" y="7" width="2.500" height="9" /><rect x="11.500" y="3" width="2.500" height="13" /></g></TrayIcon>
                <TrayIcon><path d="M2 7h3l4-4v13l-4-4H2z" fill="#e6e7df" stroke="#a8aa9f" /><path d="M11 6c1 2 1 4 0 6M13 4c2 3 2 7 0 10" fill="none" stroke="#a8aa9f" /></TrayIcon>
              </div>
              <div className="ml-[11px] w-[52px] text-center text-[10.500px] leading-[14px] tracking-[-0.3px] text-[#333]">14:02<br />10/08/2019</div>
              <svg viewBox="0 0 15 12" className="ml-[5px] h-[12px] w-[15px]"><rect width="15" height="10" fill="#2f7ad6" /><rect y="8" width="15" height="2" fill="#7a9a4a" /><rect y="10" width="15" height="2" fill="#333" /></svg>
            </div>
          </div>

          {/* Mouse pointer */}
          <svg viewBox="0 0 12 19" className="absolute left-[780px] top-[14px] h-[19px] w-[12px]">
            <path d="M1 1v14l3.500-3 2.500 6 2.500-1-2.500-6H11z" fill="#111" stroke="#fff" strokeWidth="1" />
          </svg>
        </div>
        <div className="w-[94px] shrink-0 bg-gradient-to-b from-[#808080] from-80% to-[#585858]" />
      </div>

      {/* Local taskbar sliver */}
      <div className="flex h-[8px] shrink-0 items-end border-b border-[#c99a96] bg-[#d6d6d6]">
        <div className="ml-[28px] h-[2px] w-[9px] bg-[#eeeeee]" />
        <div className="ml-[35px] h-[2px] w-[8px] bg-[#e8cf73]" />
        <div className="ml-[64px] h-[3px] w-[12px] bg-[#e8a030]" />
        <div className="ml-[20px] flex h-[5px] w-[58px] justify-center border border-b-0 border-[#ececec]"><div className="mt-[2px] h-[3px] w-[12px] bg-[#d9b64a]" /></div>
        <div className="ml-[26px] h-[3px] w-[12px] rounded-t-full bg-[#e8202a]" />
        <div className="ml-[49px] h-[3px] w-[16px] rounded-t-full bg-[#d8604a]" />
        <div className="ml-[38px] h-[3px] w-[31px] bg-[#0a7a1e]" />
        <div className="ml-[35px] h-[3px] w-[22px] bg-[#8fb4d8]" />
        <div className="ml-[33px] h-[2px] w-[21px] bg-[#a04040]" />
        <div className="ml-[43px] h-[3px] w-[33px] bg-[#20263a]" />
        <div className="ml-[16px] flex h-[5px] w-[58px] justify-center border border-b-0 border-[#ececec]"><div className="mt-[2px] h-[3px] w-[12px] bg-[#2c4fb0]" /></div>
        <div className="ml-[5px] h-[6px] w-px bg-[#36d060]" />
        <div className="ml-[4px] flex h-[5px] w-[56px] justify-center border border-b-0 border-[#ececec]"><div className="mt-[2px] h-[3px] w-[28px] bg-[#111]" /></div>
        <div className="ml-px flex h-[5px] w-[60px] justify-center border border-b-0 border-[#f5f5f5]"><div className="mt-[2px] h-[3px] w-[32px] bg-[#f0382c]" /></div>
        <div className="ml-[3px] flex h-[5px] w-[58px] justify-center border border-b-0 border-[#ececec]"><div className="mt-[2px] h-[3px] w-[25px] bg-[#dde4f0]" /></div>
      </div>
    </div>
  );
}
